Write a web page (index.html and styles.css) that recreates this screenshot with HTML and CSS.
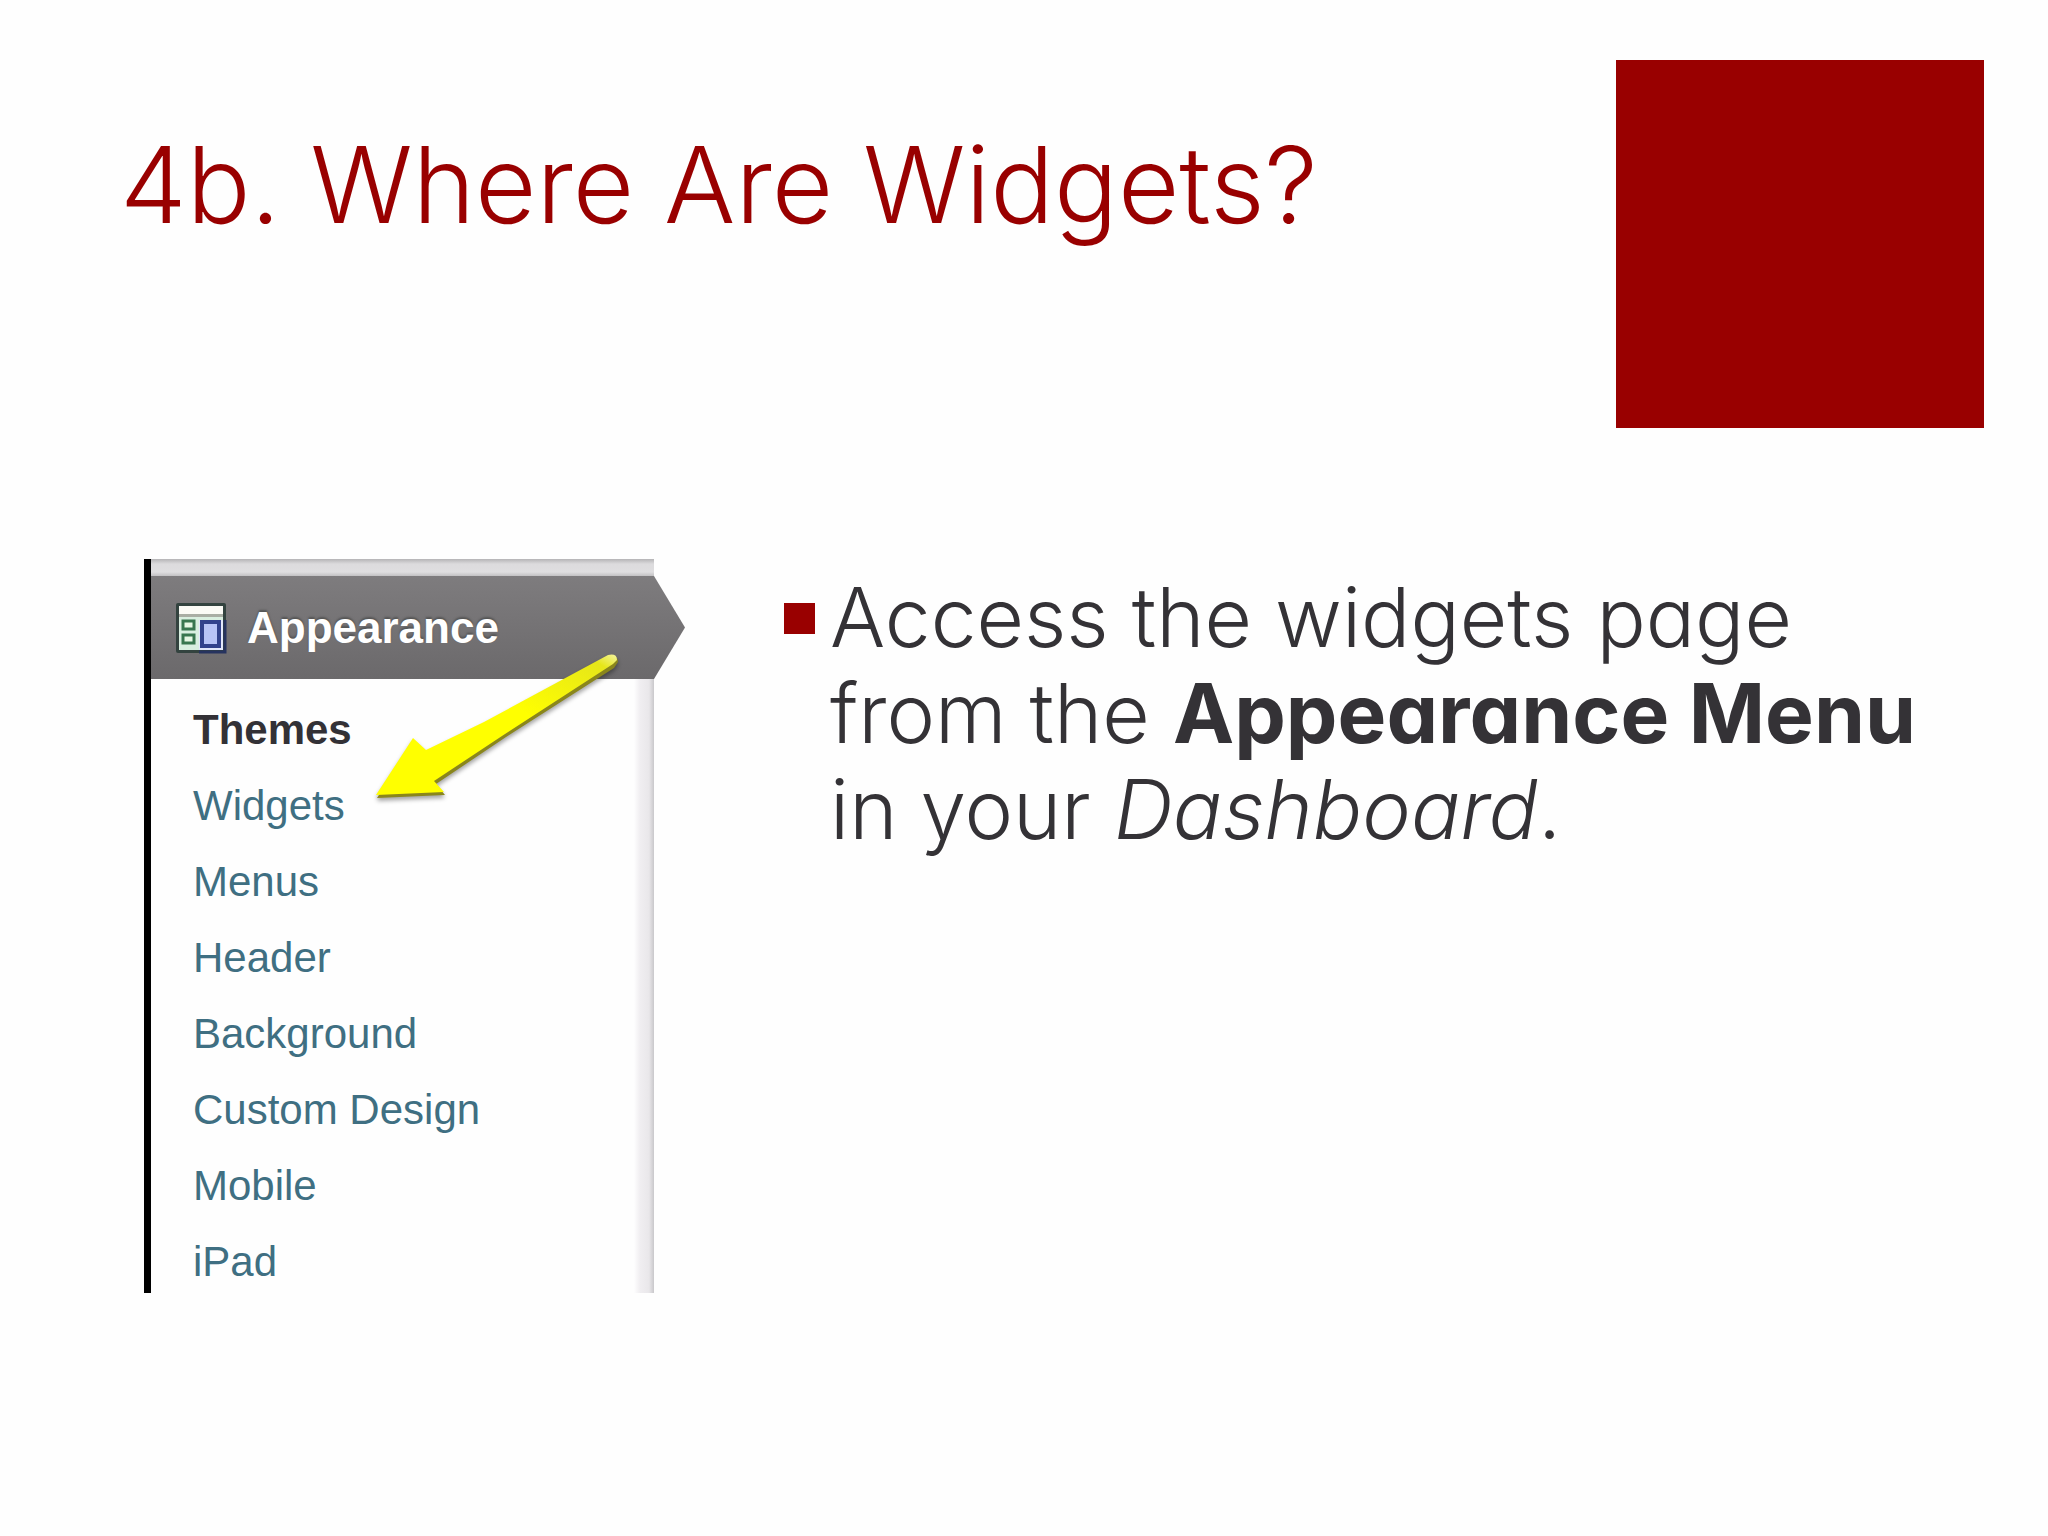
FILE: index.html
```
<!DOCTYPE html>
<html lang="en">
<head>
  <meta charset="UTF-8" />
  <meta name="viewport" content="width=device-width, initial-scale=1" />
  <title>4b. Where Are Widgets?</title>
  <link rel="stylesheet" href="styles.css">
</head>
<body>

<header class="slide-header">
  <h1>4b. Where Are Widgets?</h1>
  <div class="accent"></div>
</header>

<main class="slide-content">
  <nav class="admin-menu" aria-label="Appearance">
    <div class="menu-top"></div>
    <div class="menu-head">
      <svg class="menu-icon" viewBox="0 0 52 52" aria-hidden="true">
        <rect x="1" y="1" width="50" height="50" rx="2" fill="#33433f"/>
        <rect x="4" y="4" width="44" height="44" fill="#d9efe0"/>
        <rect x="4" y="4" width="44" height="9" fill="#fbfbf6"/>
        <rect x="4" y="12" width="44" height="3" fill="#a9aea4"/>
        <rect x="24" y="18" width="24" height="30" fill="#e3e8fb"/>
        <rect x="8" y="19" width="11" height="8" fill="#e6f7e4" stroke="#38764f" stroke-width="3"/>
        <rect x="8" y="33" width="11" height="8" fill="#e6f7e4" stroke="#38764f" stroke-width="3"/>
        <rect x="27" y="20" width="17" height="24" fill="#b9c4f6" stroke="#33428c" stroke-width="4"/>
        <path d="M24 50H50V18" fill="none" stroke="#26335f" stroke-width="3"/>
      </svg>
      <span>Appearance</span>
    </div>
    <ul class="menu-list">
      <li><a class="current" href="#">Themes</a></li>
      <li><a href="#">Widgets</a></li>
      <li><a href="#">Menus</a></li>
      <li><a href="#">Header</a></li>
      <li><a href="#">Background</a></li>
      <li><a href="#">Custom Design</a></li>
      <li><a href="#">Mobile</a></li>
      <li><a href="#">iPad</a></li>
    </ul>

    <!-- arrow pointing at Widgets -->
    <svg class="arrow" viewBox="0 0 260 160" aria-hidden="true">
      <defs>
        <linearGradient id="shaft" x1="0" y1="1" x2="1" y2="0">
          <stop offset="0.6" stop-color="#ffff00"/>
          <stop offset="0.93" stop-color="#e6e619"/>
          <stop offset="1" stop-color="#f4f4a0"/>
        </linearGradient>
      </defs>
      <path d="M9 147L46 91L59 102L116 74L242 6Q250 4 250 11L246 17L138 86L68 133L77 144Z" fill="#8a861c"/>
      <path d="M8 144L45 87L58 99L116 71L240 4Q249 2 249 9L245 13L137 83L66 130L76 141Z" fill="url(#shaft)"/>
    </svg>
  </nav>

  <ul class="points">
    <li>Access the widgets page from the <strong>Appearance Menu</strong> in your <em>Dashboard</em>.</li>
  </ul>
</main>

</body>
</html>
```
FILE: styles.css
```
* {
  box-sizing: border-box;
}
body {
  margin: 0;
  background-color: #fefefe;
  color: #343236;
  font-family: "Century Gothic", Inter, sans-serif;
  font-weight: 300;
  font-feature-settings: "cv11";
}
.slide-header {
  display: flex;
  justify-content: space-between;
  align-items: flex-start;
  padding: 60px 64px 0 120px;
}
h1 {
  margin: 60px 0 0;
  color: #990000;
  font-size: 106px;
  line-height: 130px;
  font-weight: 300;
}
.accent {
  flex: none;
  width: 368px;
  height: 368px;
  background-color: #990000;
}
.slide-content {
  display: flex;
  align-items: flex-start;
  gap: 99px;
  padding: 131px 120px 80px 144px;
}

/* Admin menu */
.admin-menu {
  position: relative;
  flex: none;
  width: 541px;
  border-left: 7px solid #000;
  font-family: "Liberation Sans", Arial, sans-serif;
}
.menu-top {
  height: 17px;
  margin-right: 31px;
  background: linear-gradient(#b5b4b6, #dcdbdd 5px, #dfdee0 13px, #c2c1c3);
}
.menu-head {
  display: flex;
  align-items: center;
  gap: 20px;
  height: 103px;
  padding-left: 24px;
  background: linear-gradient(#7e7c7e, #6b696b);
  clip-path: polygon(0 0, calc(100% - 31px) 0, 100% 50%, calc(100% - 31px) 100%, 0 100%);
  color: #fff;
  font-size: 44px;
  font-weight: bold;
  text-shadow: 0 -2px 2px #555;
}
.menu-icon {
  width: 52px;
  height: 52px;
}
.menu-list {
  display: flex;
  flex-direction: column;
  gap: 14px;
  list-style: none;
  margin: 0 31px 0 0;
  padding: 20px 0 0 42px;
  background: linear-gradient(to left, #c9c8cb, #e9e7ea 5px, #f0eef1 14px, #fefefe 20px);
  font-size: 42px;
  line-height: 62px;
  font-weight: normal;
}
.menu-list a {
  color: #3f6f82;
  text-decoration: none;
}
.menu-list a:hover {
  text-decoration: underline;
}
.menu-list .current {
  color: #333136;
  font-weight: bold;
}
.arrow {
  position: absolute;
  top: 92px;
  left: 217px;
  width: 260px;
  height: 160px;
  filter: drop-shadow(0 3px 2px rgba(0, 0, 0, 0.35));
}

/* Bullet text */
.points {
  flex: 1;
  list-style: none;
  margin: 11px 0 0;
  padding: 0;
  font-size: 82px;
  line-height: 96px;
}
.points li {
  position: relative;
  padding-left: 46px;
}
.points li::before {
  content: "";
  position: absolute;
  top: 33px;
  left: 0;
  width: 31px;
  height: 31px;
  background-color: #990000;
}
.points strong {
  font-weight: 700;
}
```
